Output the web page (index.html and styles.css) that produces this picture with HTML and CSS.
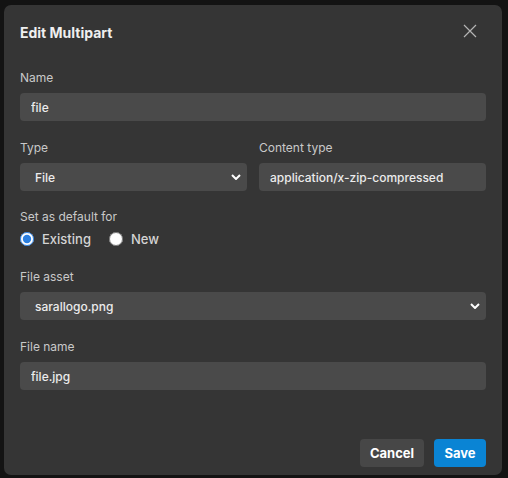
FILE: index.html
```html
<!DOCTYPE html>
<html lang="en">
<head>
    <meta charset="UTF-8">
    <meta name="viewport" content="width=device-width, initial-scale=1.0">
    <title>Edit Multipart</title>
    <link rel="stylesheet" href="styles.css">
</head>
<body>
    <div class="dialog">
        <div class="dialog-header">
            <h2>Edit Multipart</h2>
            <button class="close-btn" type="button" aria-label="Close">
                <svg width="14" height="14" viewBox="0 0 14 14">
                    <path d="M1 1 L13 13 M13 1 L1 13" stroke="#b4b4b4" stroke-width="1.2" fill="none"/>
                </svg>
            </button>
        </div>

        <form class="dialog-body">
            <div class="form-group">
                <label for="name">Name</label>
                <input type="text" id="name" value="file">
            </div>

            <div class="form-row">
                <div class="form-group">
                    <label for="type">Type</label>
                    <div class="select-wrap">
                        <select id="type">
                            <option>File</option>
                            <option>Text</option>
                        </select>
                        <svg class="chevron" width="10" height="6" viewBox="0 0 10 6">
                            <path d="M1 1 L5 5 L9 1" stroke="#fff" stroke-width="2" fill="none"/>
                        </svg>
                    </div>
                </div>
                <div class="form-group">
                    <label for="contentType">Content type</label>
                    <input type="text" id="contentType" value="application/x-zip-compressed">
                </div>
            </div>

            <div class="form-group defaults">
                <label>Set as default for</label>
                <div class="radio-row">
                    <label class="radio"><input type="radio" name="default" checked> Existing</label>
                    <label class="radio"><input type="radio" name="default"> New</label>
                </div>
            </div>

            <div class="form-group">
                <label for="asset">File asset</label>
                <div class="select-wrap">
                    <select id="asset">
                        <option>sarallogo.png</option>
                    </select>
                    <svg class="chevron" width="10" height="6" viewBox="0 0 10 6">
                        <path d="M1 1 L5 5 L9 1" stroke="#fff" stroke-width="2" fill="none"/>
                    </svg>
                </div>
            </div>

            <div class="form-group">
                <label for="fileName">File name</label>
                <input type="text" id="fileName" value="file.jpg">
            </div>
        </form>

        <div class="dialog-footer">
            <button type="button" class="btn btn-cancel">Cancel</button>
            <button type="button" class="btn btn-save">Save</button>
        </div>
    </div>
</body>
</html>
```

FILE: styles.css
```css
* {
    box-sizing: border-box;
    margin: 0;
    padding: 0;
    font-family: Inter, 'Noto Sans', Arial, sans-serif;
}

body {
    background-color: #131313;
    padding: 5px 6px 3px 4px;
    height: 100vh;
}

.dialog {
    background-color: #353535;
    border-radius: 7px;
    width: 498px;
    height: 470px;
    display: flex;
    flex-direction: column;
    padding: 0 16px 8px 16px;
}

.dialog-header {
    display: flex;
    justify-content: space-between;
    align-items: center;
    height: 54px;
    padding-top: 1px;
}

.dialog-header h2 {
    font-size: 14px;
    font-weight: 700;
    color: #efefef;
}

.close-btn {
    background: none;
    border: none;
    width: 14px;
    height: 14px;
    margin-right: 9px;
    margin-top: -3px;
    cursor: pointer;
    display: flex;
}

.dialog-body {
    flex: 1;
    display: flex;
    flex-direction: column;
    gap: 19px;
    padding-top: 11px;
}

.form-row {
    display: grid;
    grid-template-columns: 1fr 1fr;
    gap: 12px;
}

.form-group {
    display: flex;
    flex-direction: column;
}

.form-group > label {
    font-size: 12px;
    line-height: 16px;
    color: #c9c9c9;
    margin-bottom: 7px;
}

.defaults {
    margin-top: -1px;
    margin-bottom: 2px;
}

.defaults > label {
    margin-bottom: 5px;
}

input[type="text"],
select {
    width: 100%;
    height: 28px;
    background-color: #4a4a4a;
    border: none;
    border-radius: 4px;
    color: #ececec;
    font-size: 12px;
    font-weight: 500;
    padding: 0 11px;
    outline: none;
}

.select-wrap {
    position: relative;
}

select {
    appearance: none;
    -webkit-appearance: none;
    padding-left: 15px;
}

.chevron {
    position: absolute;
    right: 6px;
    top: 11px;
    pointer-events: none;
}

.radio-row {
    display: flex;
    gap: 18px;
    height: 18px;
    align-items: center;
}

.radio {
    display: flex;
    align-items: center;
    gap: 8px;
    font-size: 13px;
    color: #d4d4d4;
    font-weight: 500;
}

.radio input {
    width: 14px;
    height: 14px;
    margin: 0;
    accent-color: #2b7fe0;
}

.dialog-footer {
    display: flex;
    justify-content: flex-end;
    gap: 10px;
}

.btn {
    height: 28px;
    border: none;
    border-radius: 4px;
    font-size: 13px;
    font-weight: 700;
    color: #fff;
    cursor: pointer;
}

.btn-cancel {
    background-color: #474747;
    width: 64px;
}

.btn-save {
    background-color: #0a84d4;
    width: 52px;
}
```
